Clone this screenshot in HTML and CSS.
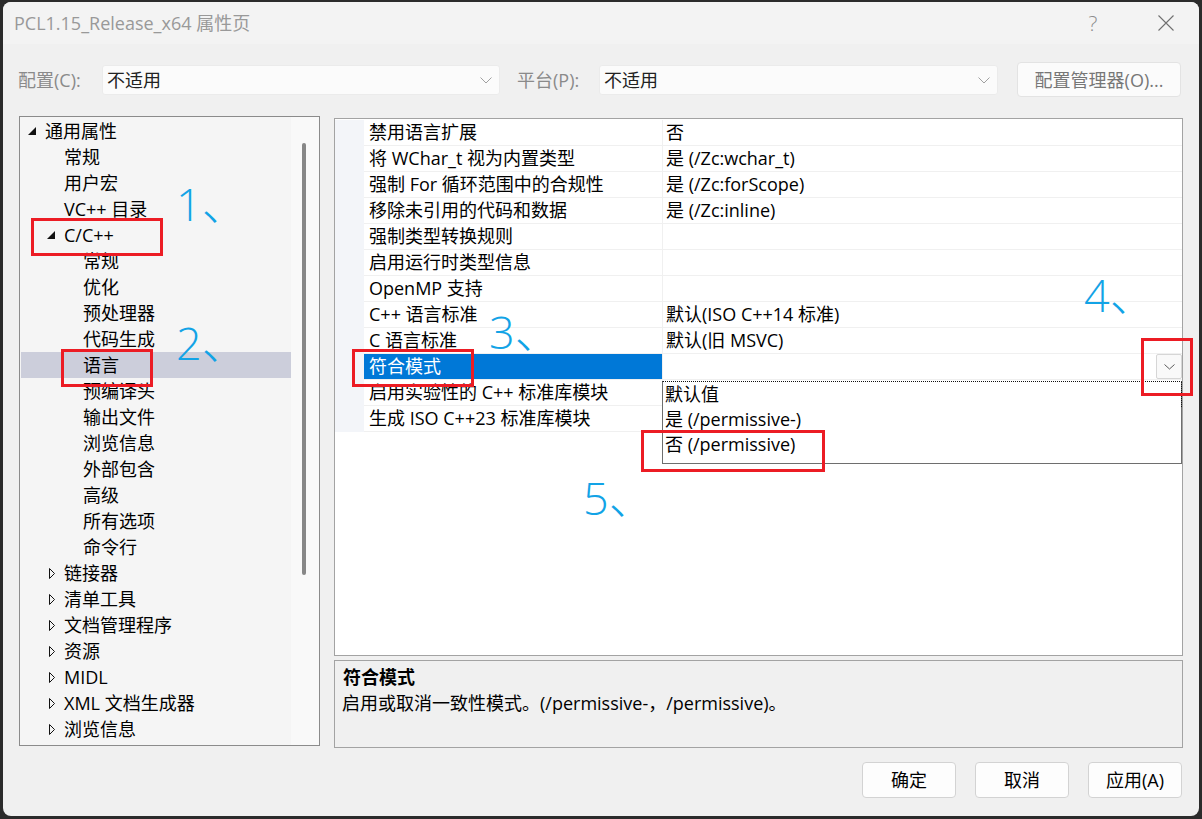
FILE: index.html
```html
<!DOCTYPE html>
<html lang="zh-CN">
<head>
<meta charset="utf-8">
<title>PCL1.15_Release_x64 属性页</title>
<link rel="stylesheet" href="styles.css">
</head>
<body>
<div class="window">
  <header class="titlebar">
    <span class="title">PCL1.15_Release_x64 属性页</span>
    <span class="help">?</span>
    <svg class="close" width="16" height="16" viewBox="0 0 16 16"><path d="M0.5 0.5 L15.5 15.5 M15.5 0.5 L0.5 15.5" stroke="#707070" stroke-width="1.1" fill="none"/></svg>
  </header>

  <div class="toolbar">
    <span class="lbl lbl-config">配置(C):</span>
    <div class="combo combo-config">
      <span>不适用</span>
      <svg class="chev" width="12" height="7" viewBox="0 0 12 7"><polyline points="0.5,0.5 6,6 11.5,0.5" fill="none" stroke="#a0a0a0" stroke-width="1"/></svg>
    </div>
    <span class="lbl lbl-platform">平台(P):</span>
    <div class="combo combo-platform">
      <span>不适用</span>
      <svg class="chev" width="12" height="7" viewBox="0 0 12 7"><polyline points="0.5,0.5 6,6 11.5,0.5" fill="none" stroke="#a0a0a0" stroke-width="1"/></svg>
    </div>
    <button class="btn-manager">配置管理器(O)...</button>
  </div>

  <div class="main">
    <div class="tree">
      <ul class="nodes">
        <li class="node lvl-0"><svg class="twisty" width="19" height="26" viewBox="0 0 19 26"><polygon points="10,9 10,17 2,17" fill="#111"/></svg><span>通用属性</span></li>
        <li class="node lvl-1"><span class="twisty"></span><span>常规</span></li>
        <li class="node lvl-1"><span class="twisty"></span><span>用户宏</span></li>
        <li class="node lvl-1"><span class="twisty"></span><span>VC++ 目录</span></li>
        <li class="node lvl-1"><svg class="twisty" width="19" height="26" viewBox="0 0 19 26"><polygon points="10,9 10,17 2,17" fill="#111"/></svg><span>C/C++</span></li>
        <li class="node lvl-2"><span class="twisty"></span><span>常规</span></li>
        <li class="node lvl-2"><span class="twisty"></span><span>优化</span></li>
        <li class="node lvl-2"><span class="twisty"></span><span>预处理器</span></li>
        <li class="node lvl-2"><span class="twisty"></span><span>代码生成</span></li>
        <li class="node lvl-2 selected"><span class="twisty"></span><span>语言</span></li>
        <li class="node lvl-2"><span class="twisty"></span><span>预编译头</span></li>
        <li class="node lvl-2"><span class="twisty"></span><span>输出文件</span></li>
        <li class="node lvl-2"><span class="twisty"></span><span>浏览信息</span></li>
        <li class="node lvl-2"><span class="twisty"></span><span>外部包含</span></li>
        <li class="node lvl-2"><span class="twisty"></span><span>高级</span></li>
        <li class="node lvl-2"><span class="twisty"></span><span>所有选项</span></li>
        <li class="node lvl-2"><span class="twisty"></span><span>命令行</span></li>
        <li class="node lvl-1"><svg class="twisty" width="19" height="26" viewBox="0 0 19 26"><polygon points="4.5,8.5 9.5,13.5 4.5,18.5" fill="none" stroke="#111" stroke-width="1"/></svg><span>链接器</span></li>
        <li class="node lvl-1"><svg class="twisty" width="19" height="26" viewBox="0 0 19 26"><polygon points="4.5,8.5 9.5,13.5 4.5,18.5" fill="none" stroke="#111" stroke-width="1"/></svg><span>清单工具</span></li>
        <li class="node lvl-1"><svg class="twisty" width="19" height="26" viewBox="0 0 19 26"><polygon points="4.5,8.5 9.5,13.5 4.5,18.5" fill="none" stroke="#111" stroke-width="1"/></svg><span>文档管理程序</span></li>
        <li class="node lvl-1"><svg class="twisty" width="19" height="26" viewBox="0 0 19 26"><polygon points="4.5,8.5 9.5,13.5 4.5,18.5" fill="none" stroke="#111" stroke-width="1"/></svg><span>资源</span></li>
        <li class="node lvl-1"><svg class="twisty" width="19" height="26" viewBox="0 0 19 26"><polygon points="4.5,8.5 9.5,13.5 4.5,18.5" fill="none" stroke="#111" stroke-width="1"/></svg><span>MIDL</span></li>
        <li class="node lvl-1"><svg class="twisty" width="19" height="26" viewBox="0 0 19 26"><polygon points="4.5,8.5 9.5,13.5 4.5,18.5" fill="none" stroke="#111" stroke-width="1"/></svg><span>XML 文档生成器</span></li>
        <li class="node lvl-1"><svg class="twisty" width="19" height="26" viewBox="0 0 19 26"><polygon points="4.5,8.5 9.5,13.5 4.5,18.5" fill="none" stroke="#111" stroke-width="1"/></svg><span>浏览信息</span></li>
      </ul>
      <div class="vscroll"><div class="thumb"></div></div>
    </div>

    <div class="right">
      <div class="grid">
        <div class="prop"><span class="gutter"></span><span class="name">禁用语言扩展</span><span class="value">否</span></div>
        <div class="prop"><span class="gutter"></span><span class="name">将 WChar_t 视为内置类型</span><span class="value">是 (/Zc:wchar_t)</span></div>
        <div class="prop"><span class="gutter"></span><span class="name">强制 For 循环范围中的合规性</span><span class="value">是 (/Zc:forScope)</span></div>
        <div class="prop"><span class="gutter"></span><span class="name">移除未引用的代码和数据</span><span class="value">是 (/Zc:inline)</span></div>
        <div class="prop"><span class="gutter"></span><span class="name">强制类型转换规则</span><span class="value"></span></div>
        <div class="prop"><span class="gutter"></span><span class="name">启用运行时类型信息</span><span class="value"></span></div>
        <div class="prop"><span class="gutter"></span><span class="name">OpenMP 支持</span><span class="value"></span></div>
        <div class="prop"><span class="gutter"></span><span class="name">C++ 语言标准</span><span class="value">默认(ISO C++14 标准)</span></div>
        <div class="prop"><span class="gutter"></span><span class="name">C 语言标准</span><span class="value">默认(旧 MSVC)</span></div>
        <div class="prop active"><span class="gutter"></span><span class="name">符合模式</span><span class="value"><span class="drop-btn"><svg width="11" height="6" viewBox="0 0 11 6"><polyline points="0.5,0.5 5.5,5 10.5,0.5" fill="none" stroke="#5a5a5a" stroke-width="1"/></svg></span></span></div>
        <div class="prop"><span class="gutter"></span><span class="name">启用实验性的 C++ 标准库模块</span><span class="value"></span></div>
        <div class="prop"><span class="gutter"></span><span class="name">生成 ISO C++23 标准库模块</span><span class="value"></span></div>

        <ul class="droplist">
          <li class="focus">默认值</li>
          <li>是 (/permissive-)</li>
          <li>否 (/permissive)</li>
        </ul>
      </div>
      <div class="desc">
        <div class="desc-title">符合模式</div>
        <div class="desc-text">启用或取消一致性模式。(/permissive-，/permissive)。</div>
      </div>
    </div>
  </div>

  <footer class="footer">
    <button class="btn">确定</button>
    <button class="btn">取消</button>
    <button class="btn">应用(A)</button>
  </footer>

  <div class="mark mark-1"></div>
  <div class="mark mark-2"></div>
  <div class="mark mark-3"></div>
  <div class="mark mark-4"></div>
  <div class="mark mark-5"></div>

  <span class="step step-1">1、</span>
  <span class="step step-2">2、</span>
  <span class="step step-3">3、</span>
  <span class="step step-4">4、</span>
  <span class="step step-5">5、</span>
</div>
</body>
</html>
```

FILE: styles.css
```css
* { box-sizing: border-box; }

html, body {
  margin: 0;
  padding: 0;
}

body {
  width: 1202px;
  height: 819px;
  overflow: hidden;
  background: #2b2b2b;
  font-family: "Open Sans", "Noto Sans CJK SC", sans-serif;
  font-size: 18px;
  color: #000;
}

.window {
  position: relative;
  margin: 2px 3px 0 3px;
  width: 1196px;
  height: 814px;
  background: #f0f0f0;
  border-radius: 8px;
  overflow: hidden;
  display: flex;
  flex-direction: column;
}

/* ---------- title bar ---------- */
.titlebar {
  height: 42px;
  flex: none;
  background: #f3f3f3;
  display: flex;
  align-items: center;
  padding-left: 11px;
}
.title {
  flex: 1;
  color: #999;
  line-height: 24px;
}
.help {
  width: 20px;
  text-align: center;
  color: #8d8d8d;
  font-size: 21px;
  font-weight: 300;
  line-height: 24px;
  margin-right: 55px;
}
.close {
  display: block;
  margin-right: 25px;
}

/* ---------- configuration row ---------- */
.toolbar {
  flex: none;
  height: 35px;
  margin-top: 18px;
  padding-left: 15px;
  display: flex;
  align-items: center;
}
.lbl {
  color: #8a8a8a;
  line-height: 24px;
}
.lbl-config { width: 84px; }
.lbl-platform { width: 82px; margin-left: 17px; }
.combo {
  height: 30px;
  margin-top: 1px;
  background: #fbfbfb;
  border: 1px solid #ebebeb;
  border-radius: 3px;
  display: flex;
  align-items: center;
  justify-content: space-between;
  padding: 0 7px 0 4px;
  color: #222;
  line-height: 24px;
}
.combo-config { width: 398px; }
.combo-platform { width: 399px; }
.chev { display: block; }
.btn-manager {
  margin-left: 19px;
  width: 164px;
  height: 35px;
  background: #fbfbfb;
  border: 1px solid #e3e3e3;
  border-radius: 4px;
  font: inherit;
  color: #777;
  line-height: 24px;
  padding: 0;
}

/* ---------- main area ---------- */
.main {
  flex: none;
  display: flex;
  align-items: flex-start;
  margin-top: 19px;
  padding-left: 16px;
  height: 632px;
}

/* tree */
.tree {
  width: 301px;
  height: 630px;
  border: 1px solid #8b8b8b;
  background: #f5f5f5;
  display: flex;
}
.nodes {
  list-style: none;
  margin: 0;
  padding: 1px 0 0 0;
  width: 271px;
  flex: none;
}
.node {
  height: 26px;
  display: flex;
  align-items: center;
  line-height: 26px;
  white-space: nowrap;
}
.node.lvl-0 { padding-left: 6px; }
.node.lvl-1 { padding-left: 25px; }
.node.lvl-2 { padding-left: 44px; }
.node.selected {
  background: #cccedb;
  margin-left: 1px;
  padding-left: 43px;
}
.twisty {
  display: block;
  width: 19px;
  height: 26px;
  flex: none;
}
.vscroll {
  flex: 1;
  background: #f9f9f9;
  position: relative;
}
.thumb {
  position: absolute;
  left: 11px;
  top: 26px;
  width: 4px;
  height: 432px;
  border-radius: 2px;
  background: #878787;
}

/* property grid */
.right {
  margin-left: 14px;
  width: 849px;
  display: flex;
  flex-direction: column;
}
.grid {
  position: relative;
  margin-top: 2px;
  height: 538px;
  border: 1px solid #a3a3a3;
  background: #fff;
  padding-top: 1px;
}
.prop {
  display: flex;
  height: 26px;
  line-height: 25px;
  white-space: nowrap;
}
.gutter {
  width: 29px;
  flex: none;
  background: #f3f5f9;
}
.name {
  width: 298px;
  flex: none;
  padding-left: 5px;
  border-bottom: 1px solid #f0f0f0;
}
.value {
  flex: 1;
  position: relative;
  padding-left: 3px;
  border-left: 1px solid #f0f0f0;
  border-bottom: 1px solid #f0f0f0;
}
.prop.active .name {
  background: #0078d7;
  color: #fff;
}
.drop-btn {
  position: absolute;
  right: 0;
  top: 0;
  width: 26px;
  height: 25px;
  background: #f9f9f9;
  border: 1px solid #d6d6d6;
  border-radius: 2px;
  display: flex;
  align-items: center;
  justify-content: center;
}
.drop-btn svg { display: block; }

.droplist {
  position: absolute;
  left: 327px;
  top: 262px;
  width: 520px;
  height: 83px;
  margin: 0;
  padding: 0;
  list-style: none;
  background: #fff;
  border: 1px solid #6e6e6e;
  border-top: 1px dotted #111;
}
.droplist li {
  height: 25px;
  line-height: 25px;
  padding-left: 2px;
  white-space: nowrap;
}
.droplist li.focus {
  margin-right: -1px;
  border-right: 1px dotted #111;
}

/* description */
.desc {
  margin-top: 4px;
  height: 88px;
  border: 1px solid #a3a3a3;
  background: #f0f0f0;
  padding: 3px 0 0 7px;
  line-height: 26px;
}
.desc-title { font-weight: 700; padding-left: 1px; }

/* ---------- footer ---------- */
.footer {
  flex: none;
  display: flex;
  justify-content: flex-end;
  gap: 19px;
  margin-top: 14px;
  padding-right: 17px;
}
.btn {
  width: 94px;
  height: 36px;
  background: #fdfdfd;
  border: 1px solid #d3d3d3;
  border-radius: 4px;
  font: inherit;
  color: #000;
  line-height: 24px;
  padding: 0;
}

/* ---------- callouts drawn over the dialog ---------- */
.mark {
  position: absolute;
  border: 3px solid #ec1c24;
}
.mark-1 { left: 28px;   top: 216px; width: 132px; height: 38px; }
.mark-2 { left: 58px;   top: 347px; width: 92px;  height: 38px; }
.mark-3 { left: 349px;  top: 347px; width: 122px; height: 38px; }
.mark-4 { left: 1138px; top: 336px; width: 52px;  height: 58px; }
.mark-5 { left: 638px;  top: 428px; width: 184px; height: 42px; }

.step {
  position: absolute;
  font-family: "Open Sans", "Noto Sans CJK SC", sans-serif;
  font-weight: 300;
  font-size: 45px;
  line-height: 45px;
  color: #12a3e6;
  white-space: nowrap;
}
.step-1 { left: 173px;  top: 179px; }
.step-2 { left: 173px;  top: 318px; }
.step-3 { left: 486px;  top: 307px; }
.step-4 { left: 1081px; top: 270px; }
.step-5 { left: 580px;  top: 473px; }
```
